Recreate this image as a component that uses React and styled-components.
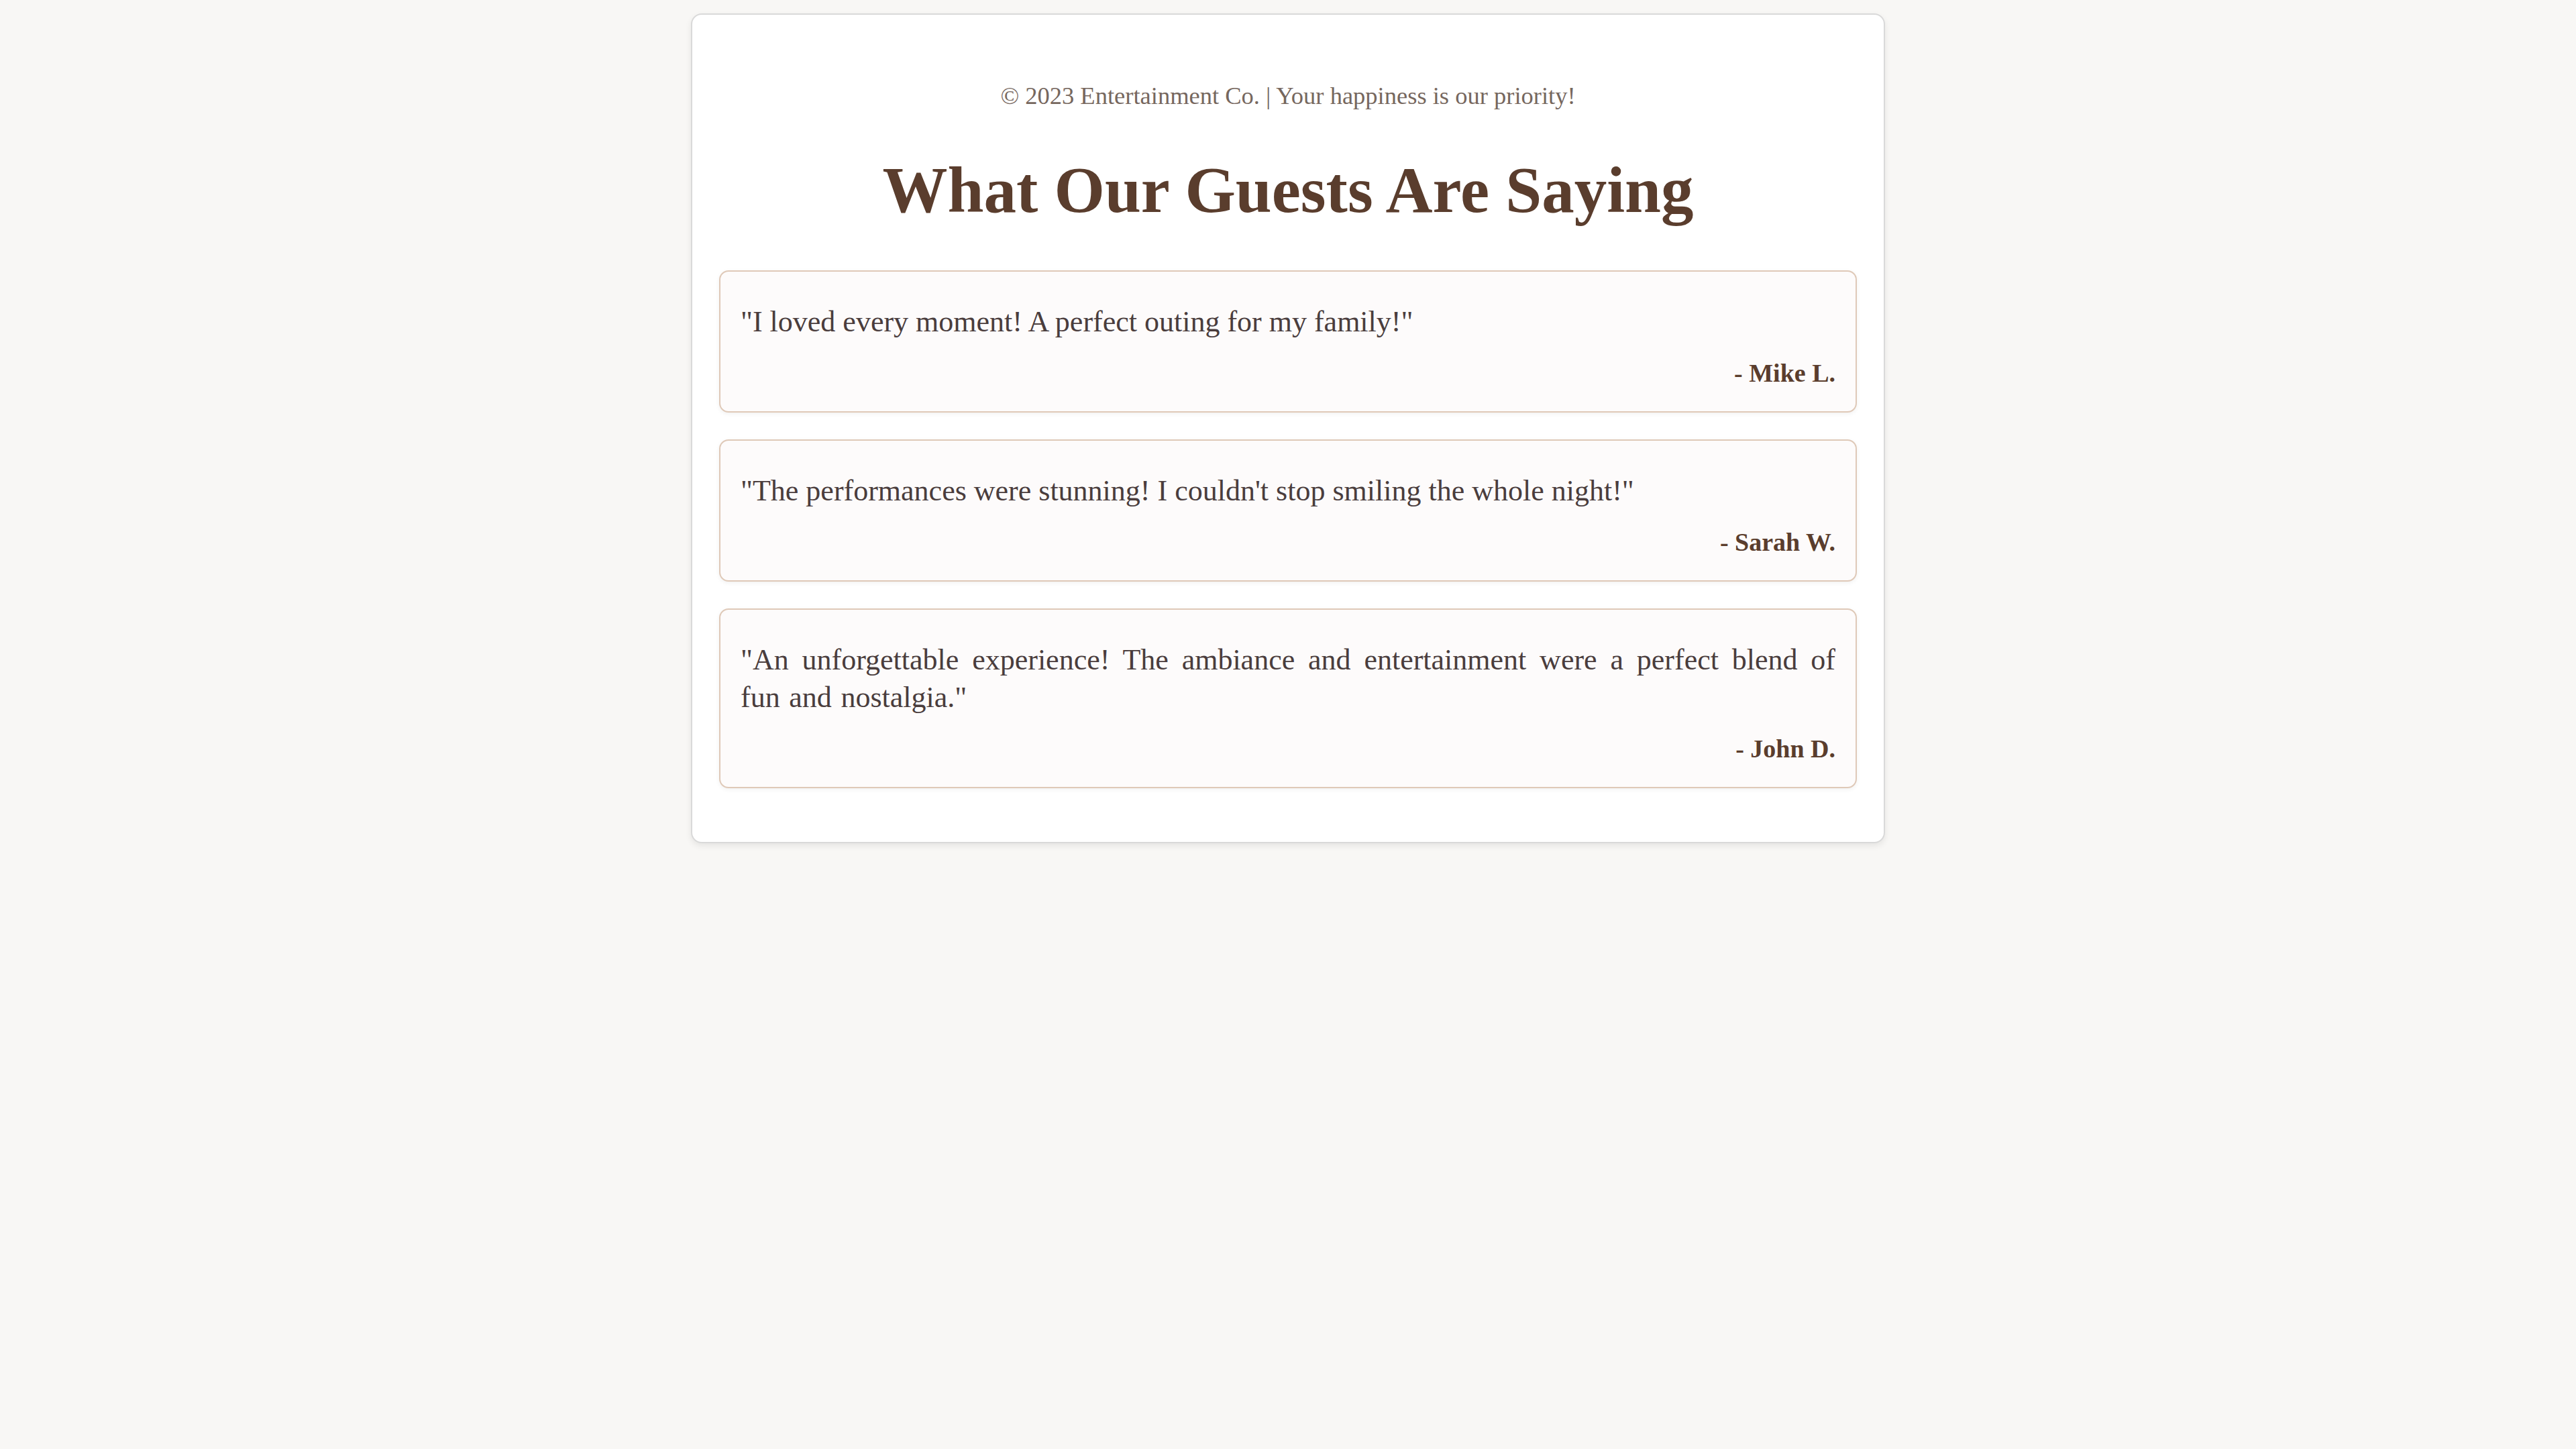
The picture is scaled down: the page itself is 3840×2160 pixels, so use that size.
import React from 'react';
import styled, { createGlobalStyle } from 'styled-components';

const GlobalStyle = createGlobalStyle`
  html, body {
    margin: 0;
    padding: 0;
    background-color: #f8f7f5;
  }
  body {
    font-family: "Liberation Serif", "Times New Roman", serif;
    min-height: 2160px;
  }
  * {
    box-sizing: border-box;
  }
`;

const Page = styled.div`
  padding-top: 20px;
`;

const Card = styled.section`
  width: 1780px;
  margin: 0 auto;
  padding: 40px 40px 80px;
  background-color: #fff;
  border: 2px solid #d9d9d9;
  border-radius: 16px;
  box-shadow: 0px 4px 10px rgba(0, 0, 0, 0.08);
`;

const Copyright = styled.p`
  margin: 61px 0 0;
  font-size: 36.5px;
  line-height: 40px;
  color: #76675e;
  text-align: center;
`;

const Title = styled.h1`
  margin: 61px 0 59px;
  font-size: 97px;
  line-height: 120px;
  font-weight: 700;
  color: #5a3d2d;
  text-align: center;
`;

const List = styled.div`
  display: flex;
  flex-direction: column;
  gap: 40px;
`;

const Testimonial = styled.article`
  padding: 32px 30px 34px;
  background-color: #fdfbfb;
  border: 2px solid #dfc9b8;
  border-radius: 14px;
  box-shadow: 0px 2px 6px rgba(0, 0, 0, 0.06);
`;

const Quote = styled.p`
  margin: 15px 0 25px;
  font-size: 44px;
  line-height: 56px;
  color: #4a3d3d;
  text-align: justify;
  word-spacing: ${(p) => (p.$loose ? '2.6px' : '0')};
`;

const Author = styled.p`
  margin: 0;
  font-size: 38px;
  line-height: 46px;
  font-weight: 700;
  color: #5a3d2d;
  text-align: right;
`;

const testimonials = [
  { quote: '"I loved every moment! A perfect outing for my family!"', author: '- Mike L.' },
  { quote: '"The performances were stunning! I couldn\'t stop smiling the whole night!"', author: '- Sarah W.' },
  {
    quote: '"An unforgettable experience! The ambiance and entertainment were a perfect blend of fun and nostalgia."',
    author: '- John D.',
    loose: true,
  },
];

const App = () => {
  return (
    <Page>
      <GlobalStyle />
      <Card>
        <Copyright>© 2023 Entertainment Co. | Your happiness is our priority!</Copyright>
        <Title>What Our Guests Are Saying</Title>
        <List>
          {testimonials.map((t) => (
            <Testimonial key={t.author}>
              <Quote $loose={t.loose}>{t.quote}</Quote>
              <Author>{t.author}</Author>
            </Testimonial>
          ))}
        </List>
      </Card>
    </Page>
  );
};

export default App;
